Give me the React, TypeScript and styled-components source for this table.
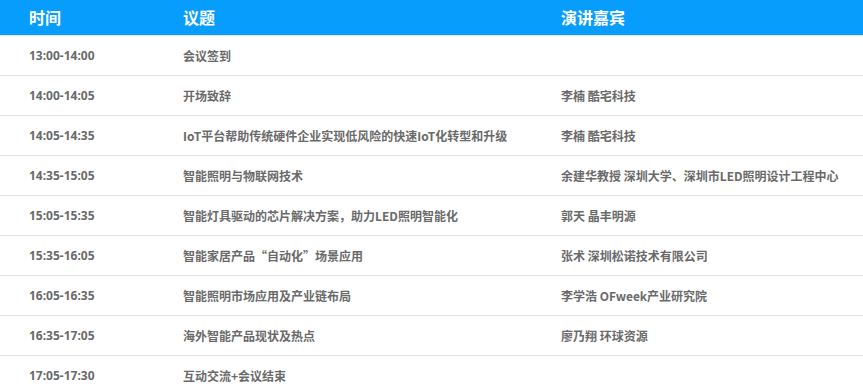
import React from "react";
import styled, { createGlobalStyle } from "styled-components";

const GlobalStyle = createGlobalStyle`
  body {
    margin: 0;
    background: #fff;
    font-family: "Noto Sans CJK SC", "Noto Sans", sans-serif;
  }
`;

const agenda = [
  { time: "13:00-14:00", topic: "会议签到", speaker: "" },
  { time: "14:00-14:05", topic: "开场致辞", speaker: "李楠 酷宅科技" },
  { time: "14:05-14:35", topic: "IoT平台帮助传统硬件企业实现低风险的快速IoT化转型和升级", speaker: "李楠 酷宅科技" },
  { time: "14:35-15:05", topic: "智能照明与物联网技术", speaker: "余建华教授 深圳大学、深圳市LED照明设计工程中心" },
  { time: "15:05-15:35", topic: "智能灯具驱动的芯片解决方案，助力LED照明智能化", speaker: "郭天 晶丰明源" },
  { time: "15:35-16:05", topic: "智能家居产品“自动化”场景应用", speaker: "张术 深圳松诺技术有限公司" },
  { time: "16:05-16:35", topic: "智能照明市场应用及产业链布局", speaker: "李学浩 OFweek产业研究院" },
  { time: "16:35-17:05", topic: "海外智能产品现状及热点", speaker: "廖乃翔 环球资源" },
  { time: "17:05-17:30", topic: "互动交流+会议结束", speaker: "" },
];

const App = () => {
  return (
    <Table>
      <GlobalStyle />
      <Head>
        <HeadCell>时间</HeadCell>
        <HeadCell>议题</HeadCell>
        <HeadCell>演讲嘉宾</HeadCell>
      </Head>
      {agenda.map((el) => (
        <Row key={el.time}>
          <Cell latin>{el.time}</Cell>
          <Cell>{el.topic}</Cell>
          <Cell>{el.speaker}</Cell>
        </Row>
      ))}
    </Table>
  );
};

export default App;

const Table = styled.div`
  width: 863px;
  height: 390px;
  overflow: hidden;
`;

const Head = styled.div`
  display: grid;
  grid-template-columns: 154px 378px 1fr;
  align-items: center;
  height: 36px;
  padding-left: 29px;
  background-color: #079dfc;
  border-bottom: 1px solid #e6e6e6;
  box-sizing: border-box;
`;

const HeadCell = styled.div`
  font-size: 16px;
  font-weight: 700;
  color: #fff;
  line-height: 1;
  margin-top: -2px;
`;

const Row = styled.div`
  display: grid;
  grid-template-columns: 154px 378px 1fr;
  align-items: center;
  height: 40px;
  padding-left: 29px;
  border-bottom: 1px solid #e1e1e1;
  box-sizing: border-box;
`;

const Cell = styled.div<{ latin?: boolean }>`
  font-size: 12px;
  font-weight: 700;
  color: #6a6a6a;
  white-space: nowrap;
  font-family: ${(p) =>
    p.latin ? '"Noto Sans", sans-serif' : '"Noto Sans CJK SC", "Noto Sans", sans-serif'};
`;
